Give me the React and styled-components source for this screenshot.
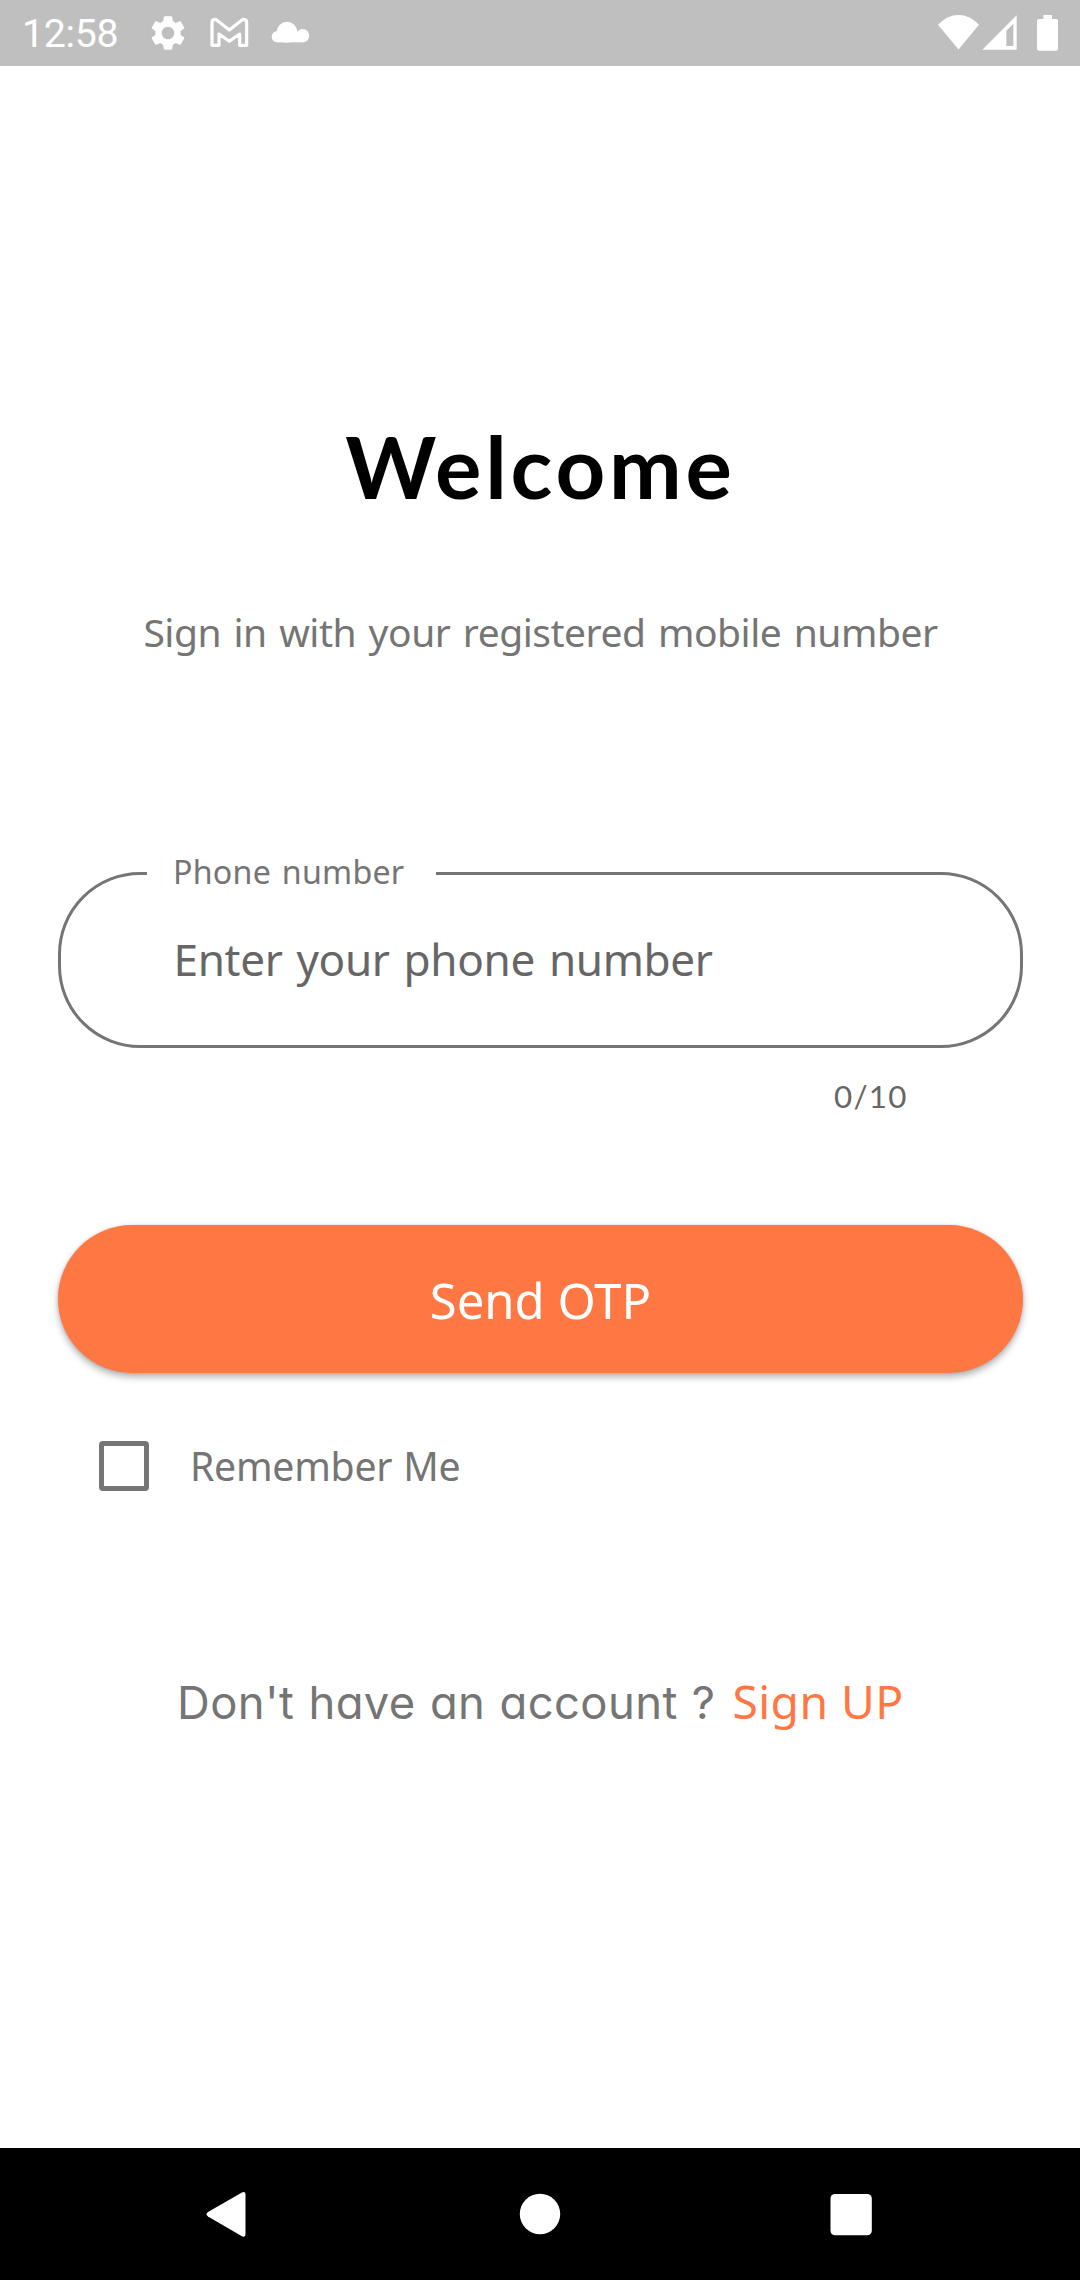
import React from "react";
import styled, { createGlobalStyle } from "styled-components";

const orange = "#ff7743";
const grey = "#757575";
const text = '"Noto Sans", sans-serif';

const GlobalStyle = createGlobalStyle`
  *, *::before, *::after { box-sizing: border-box; }
  body { margin: 0; background: #fff; }
`;

const Screen = styled.div`
  display: flex;
  flex-direction: column;
  width: 1080px;
  height: 2280px;
  overflow: hidden;
  background: #fff;
  font-family: ${text};
`;

const StatusBar = styled.header`
  display: flex;
  align-items: center;
  justify-content: space-between;
  height: 66px;
  padding: 0 21px 0 22px;
  background: #bfbfbf;
  color: #fff;
`;

const StatusGroup = styled.div`
  display: flex;
  align-items: center;
`;

const Clock = styled.span`
  width: 125px;
  padding-top: 2px;
  font: 400 39.3px/46px Roboto, sans-serif;
  letter-spacing: -0.3px;
  white-space: nowrap;
`;

const Glyph = styled.svg`
  display: block;
  flex: none;
  margin-right: ${(p) => p.$after || 0}px;
  fill: currentColor;
`;

const Content = styled.main`
  flex: 1;
  display: flex;
  flex-direction: column;
  padding: 344px 57px 0 58px;
`;

const Title = styled.h1`
  margin: 0;
  font: 700 86.8px/110px Lato, sans-serif;
  letter-spacing: 3.8px;
  text-align: center;
  color: #000;
`;

const Subtitle = styled.p`
  margin: 85px 0 0;
  font-size: 39px;
  line-height: 54px;
  letter-spacing: -0.48px;
  word-spacing: 2.8px;
  text-align: center;
  white-space: nowrap;
  color: ${grey};
`;

const Field = styled.div`
  position: relative;
  height: 176px;
  margin-top: 213px;
  border: 3px solid ${grey};
  border-radius: 82px;
`;

const FieldLabel = styled.label`
  position: absolute;
  top: -25px;
  left: 86px;
  width: 289px;
  padding-left: 26px;
  background: #fff;
  font-size: 32.2px;
  line-height: 44px;
  letter-spacing: 0.25px;
  word-spacing: 2px;
  color: ${grey};
`;

const PhoneInput = styled.input`
  width: 100%;
  height: 100%;
  padding: 0 111px 3px 112.5px;
  border: 0;
  outline: 0;
  border-radius: inherit;
  background: transparent;
  font: 400 44.1px ${text};
  letter-spacing: -0.35px;
  word-spacing: 2.8px;
  color: #222;

  &::placeholder {
    color: #666;
    opacity: 1;
  }
`;

const Counter = styled.div`
  margin-top: 28px;
  padding-right: 115.5px;
  font: 400 31.3px/40px Lato, sans-serif;
  letter-spacing: 1.2px;
  text-align: right;
  color: #666;
`;

const SendButton = styled.button`
  height: 148px;
  margin-top: 109px;
  padding: 2px 0 0;
  border: 0;
  border-radius: 74px;
  background: ${orange};
  box-shadow: 0 4px 7px rgba(0, 0, 0, 0.3), 0 0 3px rgba(0, 0, 0, 0.12);
  font: 400 49px ${text};
  color: #fff;
`;

const Remember = styled.label`
  display: flex;
  align-items: center;
  gap: 41px;
  margin: 68px 0 0 41px;
  font-size: 39.2px;
  line-height: 50px;
  letter-spacing: -0.25px;
  word-spacing: 1px;
  color: ${grey};
`;

const Checkbox = styled.input`
  appearance: none;
  width: 50px;
  height: 50px;
  margin: 0;
  border: 5px solid ${grey};
  border-radius: 4px;
`;

const Account = styled.p`
  display: flex;
  align-items: baseline;
  gap: 17px;
  margin: 181px 0 0 119px;
  line-height: 60px;
  white-space: nowrap;
`;

const Question = styled.span`
  font-family: Inter, sans-serif;
  font-size: 45.4px;
  letter-spacing: 0.4px;
  word-spacing: 1px;
  font-feature-settings: "cv11";
  color: ${grey};
`;

const SignUp = styled.a`
  font-size: 46.2px;
  letter-spacing: 0.45px;
  color: ${orange};
`;

const NavBar = styled.nav`
  display: flex;
  align-items: center;
  justify-content: center;
  gap: 262.5px;
  height: 132px;
  background: #000;
  color: #fff;
`;

const NavButton = styled.button`
  display: block;
  padding: 0;
  border: 0;
  background: none;
  color: inherit;
`;

const Gear = () => (
  <Glyph $after={11} width="42" height="42" viewBox="0 0 24 24">
    <path d="M19.14 12.94c.04-.3.06-.61.06-.94 0-.32-.02-.64-.07-.94l2.03-1.58c.18-.14.23-.41.12-.61l-1.92-3.32c-.12-.22-.37-.29-.59-.22l-2.39.96c-.5-.38-1.03-.7-1.62-.94l-.36-2.54c-.04-.24-.24-.41-.48-.41h-3.84c-.24 0-.43.17-.47.41l-.36 2.54c-.59.24-1.13.57-1.62.94l-2.39-.96c-.22-.08-.47 0-.59.22L2.74 8.87c-.12.21-.08.47.12.61l2.03 1.58c-.05.3-.09.63-.09.94s.02.64.07.94l-2.03 1.58c-.18.14-.23.41-.12.61l1.92 3.32c.12.22.37.29.59.22l2.39-.96c.5.38 1.03.7 1.62.94l.36 2.54c.05.24.24.41.48.41h3.84c.24 0 .44-.17.47-.41l.36-2.54c.59-.24 1.13-.56 1.62-.94l2.39.96c.22.08.47 0 .59-.22l1.92-3.32c.12-.22.07-.47-.12-.61l-2.01-1.58zM12 15.6c-1.98 0-3.6-1.62-3.6-3.6s1.62-3.6 3.6-3.6 3.6 1.62 3.6 3.6-1.62 3.6-3.6 3.6z" />
  </Glyph>
);

/* The glyphs below share a grid of three units per pixel. */
const Mail = () => (
  <Glyph width="60" height="66" viewBox="600 0 180 198">
    <path
      d="M636 136V68Q636 58 645 58Q648 58 651 61L688 90L725 61Q728 58 731 58Q740 58 740 68V136H719V102L688 124L657 102V136Z"
      fill="none"
      stroke="currentColor"
      strokeWidth="9.5"
      strokeLinejoin="round"
    />
  </Glyph>
);

const Cloud = () => (
  <Glyph width="60" height="66" viewBox="780 0 180 198">
    <circle cx="861" cy="97" r="31.5" />
    <circle cx="832" cy="110" r="17" />
    <circle cx="908" cy="107" r="20" />
    <path d="M832 97H908V127H832Z" />
  </Glyph>
);

const Wifi = () => (
  <Glyph $after={-1} width="48" height="66" viewBox="105 0 144 198">
    <path d="M175.500 148.500L114 74Q141 45 175.500 45T237 74Z" />
  </Glyph>
);

const Signal = () => (
  <Glyph $after={17} width="36" height="66" viewBox="246 0 108 198">
    <path fillRule="evenodd" d="M247 149L350 46V149ZM319 92V138H340V71Z" />
  </Glyph>
);

const Battery = () => (
  <Glyph width="24" height="66" viewBox="405 0 72 198">
    <rect x="411" y="57" width="63" height="95" rx="6" />
    <rect x="430" y="45" width="26" height="14" />
  </Glyph>
);

export default function App() {
  return (
    <>
      <GlobalStyle />
      <Screen>
        <StatusBar>
          <StatusGroup>
            <Clock>12:58</Clock>
            <Gear />
            <Mail />
            <Cloud />
          </StatusGroup>
          <StatusGroup>
            <Wifi />
            <Signal />
            <Battery />
          </StatusGroup>
        </StatusBar>
        <Content>
          <Title>Welcome</Title>
          <Subtitle>Sign in with your registered mobile number</Subtitle>
          <Field>
            <PhoneInput id="phone" type="tel" maxLength={10} placeholder="Enter your phone number" />
            <FieldLabel htmlFor="phone">Phone number</FieldLabel>
          </Field>
          <Counter>0/10</Counter>
          <SendButton type="button">Send OTP</SendButton>
          <Remember>
            <Checkbox type="checkbox" />
            Remember Me
          </Remember>
          <Account>
            <Question>Don't have an account ?</Question>
            <SignUp>Sign UP</SignUp>
          </Account>
        </Content>
        <NavBar>
          <NavButton aria-label="Back">
            <Glyph width="48" height="48" viewBox="0 0 48 48">
              <path d="M2 22L35.500 2.800Q39.500 0.800 39.500 4.500V44Q39.500 48 35.500 46L2 26.500Q-1 24.300 2 22Z" />
            </Glyph>
          </NavButton>
          <NavButton aria-label="Home">
            <Glyph width="48" height="48" viewBox="0 0 48 48">
              <circle cx="24" cy="24" r="20.200" />
            </Glyph>
          </NavButton>
          <NavButton aria-label="Overview">
            <Glyph width="48" height="48" viewBox="0 0 48 48">
              <rect x="3.500" y="4" width="41.300" height="41.300" rx="4.500" />
            </Glyph>
          </NavButton>
        </NavBar>
      </Screen>
    </>
  );
}
